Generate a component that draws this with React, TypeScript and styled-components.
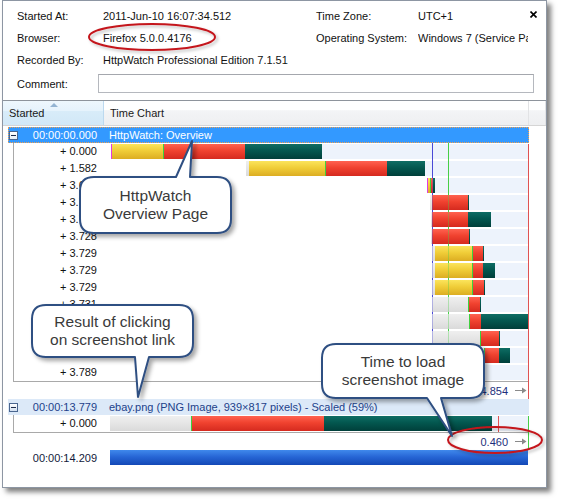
import React from 'react';
import styled, { createGlobalStyle } from 'styled-components';

const GlobalStyle = createGlobalStyle`
  html, body { margin: 0; padding: 0; background: #fff; }
  body { font-family: "Liberation Sans", Arial, sans-serif; font-size: 11px; color: #111; }
  * { box-sizing: border-box; }
`;

const Stage = styled.div`
  position: relative;
  width: 563px;
  height: 503px;
  overflow: hidden;
  padding-left: 2px;
`;

const Window = styled.div`
  width: 545px;
  height: 488px;
  border: 1px solid #8d96a3;
  background: #fff;
  box-shadow: 4px 4px 5px rgba(0, 0, 0, 0.5);
  display: flex;
  flex-direction: column;
`;

const InfoPane = styled.div`
  height: 99px;
  flex-shrink: 0;
  padding: 4px 0 0 14px;
  display: grid;
  grid-template-columns: 86px 213px 102px 110px 1fr;
  grid-template-rows: 22px 22px 22px 25px;
  align-items: center;
`;

const Label = styled.div`
  white-space: nowrap;
`;

const Value = styled.div`
  white-space: nowrap;
  overflow: hidden;
`;

const CloseBtn = styled.svg`
  align-self: start;
  margin: 6px 0 0 2px;
  width: 7px;
  height: 7px;
`;

const CommentInput = styled.div`
  grid-column: 2 / -1;
  justify-self: start;
  margin-left: -5px;
  width: 436px;
  height: 19px;
  border: 1px solid #b5b8be;
  border-top-color: #a4a7ad;
  background: #fff;
`;

const ListView = styled.div`
  flex: 1;
  border-top: 1px solid #8e949c;
  display: flex;
  flex-direction: column;
`;

const Header = styled.div`
  display: flex;
  height: 25px;
  border-bottom: 1px solid #d5d5d5;
  background: linear-gradient(#ffffff 0%, #ffffff 38%, #f3f4f6 40%, #eeeff1 100%);
`;

const HeaderCell = styled.div<{ $w?: number; $sorted?: boolean }>`
  position: relative;
  display: flex;
  align-items: center;
  padding-left: 6px;
  width: ${(p) => (p.$w ? `${p.$w}px` : 'auto')};
  flex: ${(p) => (p.$w ? 'none' : '1')};
  border-right: 1px solid ${(p) => (p.$sorted ? '#bcd9ef' : '#e2e3e5')};
  background: ${(p) =>
    p.$sorted
      ? 'linear-gradient(#eef7fd 0%, #e6f3fc 40%, #d8ecf9 42%, #d2e8f7 100%)'
      : 'transparent'};
  font-size: 11px;
  color: #1a1a1a;
`;

const SortArrow = styled.svg`
  position: absolute;
  left: 47px;
  top: 2px;
  width: 8px;
  height: 4px;
`;

const ListBody = styled.div`
  padding-top: 1px;
`;

const GroupRow = styled.div<{ $selected?: boolean }>`
  margin-left: 5px;
  width: 521px;
  height: 16px;
  display: flex;
  align-items: center;
  background: ${(p) => (p.$selected ? '#3399ff' : '#dce9f8')};
  color: ${(p) => (p.$selected ? '#ffffff' : '#22418a')};
  outline: ${(p) => (p.$selected ? '1px dotted #f0a050' : 'none')};
  outline-offset: -1px;
`;

const GroupTime = styled.div`
  width: 95px;
  display: flex;
  align-items: center;
  padding: 0 6px 0 1px;
`;

const TimeText = styled.span`
  margin-left: auto;
  white-space: nowrap;
`;

const Expander = styled.div<{ $selected?: boolean }>`
  position: relative;
  width: 9px;
  height: 9px;
  border: 1px solid #4a6690;
  background: ${(p) => (p.$selected ? 'linear-gradient(#ffffff, #e6eef8)' : 'linear-gradient(#ffffff, #d2dff0)')};
  &::after {
    content: '';
    position: absolute;
    left: 1px;
    top: 3px;
    width: 5px;
    height: 1px;
    background: #1d2b4a;
  }
`;

const GroupLabel = styled.div`
  padding-left: 6px;
  white-space: nowrap;
`;

const GroupBody = styled.div`
  position: relative;
  margin-left: 10px;
  width: 516px;
`;

const ChildList = styled.div`
  border-left: 1px solid #a9a9a9;
  border-bottom: 1px solid #a9a9a9;
`;

const ChildRow = styled.div`
  display: flex;
  height: 17px;
`;

const ChildTime = styled.div`
  width: 89px;
  padding-right: 6px;
  text-align: right;
  line-height: 17px;
  white-space: nowrap;
  color: #111;
`;

const ChartCell = styled.div`
  position: relative;
  flex: 1;
`;

const Band = styled.div`
  position: absolute;
  top: 1px;
  height: 15px;
  right: 1px;
  background: #edf3fc;
  z-index: 0;
`;

const Bar = styled.div`
  position: absolute;
  top: 1px;
  height: 15px;
  display: flex;
  z-index: 2;
`;

type Kind = 'y' | 'r' | 't' | 's' | 'g' | 'm';

const SEG_BG: Record<Kind, string> = {
  y: 'linear-gradient(#fbe45c 0%, #f0cd38 45%, #dcad22 100%)',
  r: 'linear-gradient(#ff6250 0%, #f0422f 45%, #d52a1f 100%)',
  t: 'linear-gradient(#0f6d64 0%, #03574f 45%, #003f3a 100%)',
  s: 'linear-gradient(#efefef 0%, #e5e5e5 50%, #dadada 100%)',
  g: '#3fd03f',
  m: '#e03ce0',
};

const Seg = styled.div<{ $k: Kind }>`
  height: 100%;
  flex: none;
  background: ${(p) => SEG_BG[p.$k]};
`;

const VLine = styled.div<{ $color: string; $tint?: boolean; $top: number; $bottom: number }>`
  position: absolute;
  width: 1px;
  top: ${(p) => p.$top}px;
  bottom: ${(p) => p.$bottom}px;
  background: ${(p) => p.$color};
  z-index: ${(p) => (p.$tint ? 3 : 1)};
  opacity: ${(p) => (p.$tint ? 0.35 : 1)};
`;

const Summary = styled.div`
  height: 17px;
  display: flex;
  align-items: center;
  justify-content: flex-end;
  padding-right: 2px;
  color: #1d2f7c;
`;

const ArrowIcon = styled.svg`
  width: 12px;
  height: 7px;
  margin-left: 7px;
`;

const TotalRow = styled.div`
  display: flex;
  height: 16px;
`;

const TotalTime = styled.div`
  width: 100px;
  padding-right: 6px;
  text-align: right;
  line-height: 16px;
  color: #121a3a;
`;

const TotalChart = styled.div`
  padding-left: 7px;
`;

const TotalBar = styled.div`
  width: 418px;
  height: 15px;
  background: linear-gradient(#4089ec 0%, #2766d6 45%, #1348b6 100%);
`;

const Overlay = styled.svg`
  position: absolute;
  left: 0;
  top: 0;
  width: 563px;
  height: 503px;
  pointer-events: none;
  z-index: 10;
`;

const CalloutText = styled.div<{ $x: number; $y: number; $w: number; $h: number }>`
  position: absolute;
  z-index: 11;
  left: ${(p) => p.$x}px;
  top: ${(p) => p.$y}px;
  width: ${(p) => p.$w}px;
  height: ${(p) => p.$h}px;
  display: flex;
  flex-direction: column;
  align-items: center;
  justify-content: center;
  font-size: 15.5px;
  line-height: 18px;
  color: #3a3a3a;
  white-space: nowrap;
`;

type RowData = { t: string; start: number; segs: [Kind, number][] };

const CHART_X = 103;
const CHART_END = 528;

// Rows whose start time is fully hidden under a callout carry no label text.
const group1: RowData[] = [
  { t: '+ 0.000', start: 111, segs: [['m', 1], ['y', 51], ['g', 1], ['r', 81], ['t', 77]] },
  { t: '+ 1.582', start: 246, segs: [['s', 3], ['y', 76], ['g', 1], ['r', 61], ['t', 38]] },
  { t: '+ 3.658', start: 427, segs: [['m', 1], ['y', 2], ['g', 1], ['r', 2], ['t', 2]] },
  { t: '+ 3.718', start: 430, segs: [['s', 2], ['r', 36], ['t', 1]] },
  { t: '+ 3.722', start: 431, segs: [['s', 1], ['r', 36], ['t', 23]] },
  { t: '+ 3.728', start: 431, segs: [['s', 1], ['r', 37], ['t', 1]] },
  { t: '+ 3.729', start: 432, segs: [['s', 3], ['y', 37], ['g', 1], ['r', 10], ['t', 1]] },
  { t: '+ 3.729', start: 432, segs: [['s', 3], ['y', 37], ['g', 1], ['r', 10], ['t', 12]] },
  { t: '+ 3.729', start: 432, segs: [['s', 3], ['y', 37], ['g', 1], ['r', 11], ['t', 1]] },
  { t: '+ 3.731', start: 432, segs: [['s', 36], ['g', 1], ['r', 11], ['t', 1]] },
  { t: '', start: 432, segs: [['s', 37], ['g', 1], ['r', 11], ['t', 47]] },
  { t: '', start: 432, segs: [['s', 48], ['g', 1], ['r', 18], ['t', 1]] },
  { t: '', start: 432, segs: [['s', 52], ['g', 1], ['r', 14], ['t', 11]] },
  { t: '+ 3.789', start: 432, segs: [['s', 44], ['g', 1], ['r', 4], ['t', 1]] },
];

const group2: RowData[] = [
  { t: '+ 0.000', start: 110, segs: [['s', 81], ['g', 1], ['r', 132], ['t', 168]] },
];

const Row: React.FC<{ row: RowData }> = ({ row }) => {
  const end = row.start + row.segs.reduce((a, s) => a + s[1], 0);
  return (
    <ChildRow>
      <ChildTime>{row.t}</ChildTime>
      <ChartCell>
        {end < CHART_END && <Band style={{ left: end - CHART_X }} />}
        <Bar style={{ left: row.start - CHART_X }}>
          {row.segs.map(([k, w], i) => (
            <Seg key={i} $k={k} style={{ width: w }} />
          ))}
        </Bar>
      </ChartCell>
    </ChildRow>
  );
};

const Marker: React.FC<{ x: number; color: string; top: number; bottom: number }> = ({ x, color, top, bottom }) => (
  <>
    <VLine $color={color} $top={top} $bottom={bottom} style={{ left: x - 13 }} />
    <VLine $color={color} $tint $top={top} $bottom={bottom} style={{ left: x - 13 }} />
  </>
);

const Arrow = () => (
  <ArrowIcon viewBox="0 0 12 7">
    <line x1="0" y1="3.5" x2="9" y2="3.5" stroke="#8a8a8a" strokeWidth="1" />
    <polygon points="7,0.5 11.5,3.5 7,6.5" fill="#8a8a8a" />
  </ArrowIcon>
);

const r = 14;
const callout1 = `M ${80 + r} 177 L 176 177 L 192 141 L 190 177 L ${231 - r} 177 Q 231 177 231 ${177 + r} L 231 ${233 - r} Q 231 233 ${231 - r} 233 L ${80 + r} 233 Q 80 233 80 ${233 - r} L 80 ${177 + r} Q 80 177 ${80 + r} 177 Z`;
const callout2 = `M ${32 + r} 305 L ${193 - r} 305 Q 193 305 193 ${305 + r} L 193 ${357 - r} Q 193 357 ${193 - r} 357 L 149 357 L 138 397 L 135 357 L ${32 + r} 357 Q 32 357 32 ${357 - r} L 32 ${305 + r} Q 32 305 ${32 + r} 305 Z`;
const callout3 = `M ${322 + r} 344 L ${484 - r} 344 Q 484 344 484 ${344 + r} L 484 ${398 - r} Q 484 398 ${484 - r} 398 L 441 398 L 452 436 L 427 398 L ${322 + r} 398 Q 322 398 322 ${398 - r} L 322 ${344 + r} Q 322 344 ${322 + r} 344 Z`;

export default function App() {
  return (
    <>
      <GlobalStyle />
      <Stage>
        <Window>
          <InfoPane>
            <Label>Started At:</Label>
            <Value>2011-Jun-10 16:07:34.512</Value>
            <Label>Time Zone:</Label>
            <Value>UTC+1</Value>
            <CloseBtn viewBox="0 0 7 7">
              <path d="M0.5 0.5 L6.5 6.5 M6.5 0.5 L0.5 6.5" stroke="#000" strokeWidth="1.6" />
            </CloseBtn>

            <Label>Browser:</Label>
            <Value>Firefox 5.0.0.4176</Value>
            <Label>Operating System:</Label>
            <Value>Windows 7 (Service Pack 1)</Value>
            <div />

            <Label>Recorded By:</Label>
            <Value>HttpWatch Professional Edition 7.1.51</Value>
            <div />
            <div />
            <div />

            <Label>Comment:</Label>
            <CommentInput />
          </InfoPane>

          <ListView>
            <Header>
              <HeaderCell $w={101} $sorted>
                <SortArrow viewBox="0 0 8 4">
                  <polygon points="0,4 4,0 8,4" fill="#94b4d2" />
                </SortArrow>
                Started
              </HeaderCell>
              <HeaderCell $w={425}>Time Chart</HeaderCell>
              <HeaderCell />
            </Header>

            <ListBody>
              <GroupRow $selected>
                <GroupTime>
                  <Expander $selected />
                  <TimeText>00:00:00.000</TimeText>
                </GroupTime>
                <GroupLabel>HttpWatch: Overview</GroupLabel>
              </GroupRow>

              <GroupBody>
                <ChildList>
                  {group1.map((row, i) => (
                    <Row key={i} row={row} />
                  ))}
                </ChildList>
                <Summary>
                  4.854
                  <Arrow />
                </Summary>
                <Marker x={432} color="#4b4bd6" top={0} bottom={18} />
                <Marker x={448} color="#48cf48" top={0} bottom={18} />
                <Marker x={528} color="#e05252" top={1} bottom={0} />
              </GroupBody>

              <GroupRow>
                <GroupTime>
                  <Expander />
                  <TimeText>00:00:13.779</TimeText>
                </GroupTime>
                <GroupLabel>ebay.png (PNG Image, 939×817 pixels) - Scaled (59%)</GroupLabel>
              </GroupRow>

              <GroupBody>
                <ChildList>
                  {group2.map((row, i) => (
                    <Row key={i} row={row} />
                  ))}
                </ChildList>
                <Summary>
                  0.460
                  <Arrow />
                </Summary>
                <Marker x={498} color="#e05252" top={1} bottom={18} />
                <Marker x={528} color="#48cf48" top={1} bottom={1} />
              </GroupBody>

              <TotalRow>
                <TotalTime>00:00:14.209</TotalTime>
                <TotalChart>
                  <TotalBar />
                </TotalChart>
              </TotalRow>
            </ListBody>
          </ListView>
        </Window>

        <Overlay viewBox="0 0 563 503">
          <defs>
            <filter id="callShadow" x="-20%" y="-20%" width="150%" height="150%">
              <feDropShadow dx="3" dy="3" stdDeviation="2" floodColor="#000" floodOpacity="0.35" />
            </filter>
            <filter id="ellShadow" x="-20%" y="-40%" width="140%" height="190%">
              <feDropShadow dx="2" dy="2" stdDeviation="1.5" floodColor="#000" floodOpacity="0.25" />
            </filter>
          </defs>
          <ellipse cx="152" cy="37" rx="63" ry="13" fill="none" stroke="#c4161c" strokeWidth="2" filter="url(#ellShadow)" />
          <ellipse cx="495" cy="440" rx="47" ry="13" fill="none" stroke="#c4161c" strokeWidth="2" filter="url(#ellShadow)" />
          <path d={callout1} fill="#fff" stroke="#2f4f82" strokeWidth="2" strokeLinejoin="round" filter="url(#callShadow)" />
          <path d={callout2} fill="#fff" stroke="#2f4f82" strokeWidth="2" strokeLinejoin="round" filter="url(#callShadow)" />
          <path d={callout3} fill="#fff" stroke="#2f4f82" strokeWidth="2" strokeLinejoin="round" filter="url(#callShadow)" />
        </Overlay>

        <CalloutText $x={80} $y={177} $w={151} $h={56}>
          <span>HttpWatch</span>
          <span>Overview Page</span>
        </CalloutText>
        <CalloutText $x={32} $y={305} $w={161} $h={52}>
          <span>Result of clicking</span>
          <span>on screenshot link</span>
        </CalloutText>
        <CalloutText $x={322} $y={344} $w={162} $h={54}>
          <span>Time to load</span>
          <span>screenshot image</span>
        </CalloutText>
      </Stage>
    </>
  );
}
